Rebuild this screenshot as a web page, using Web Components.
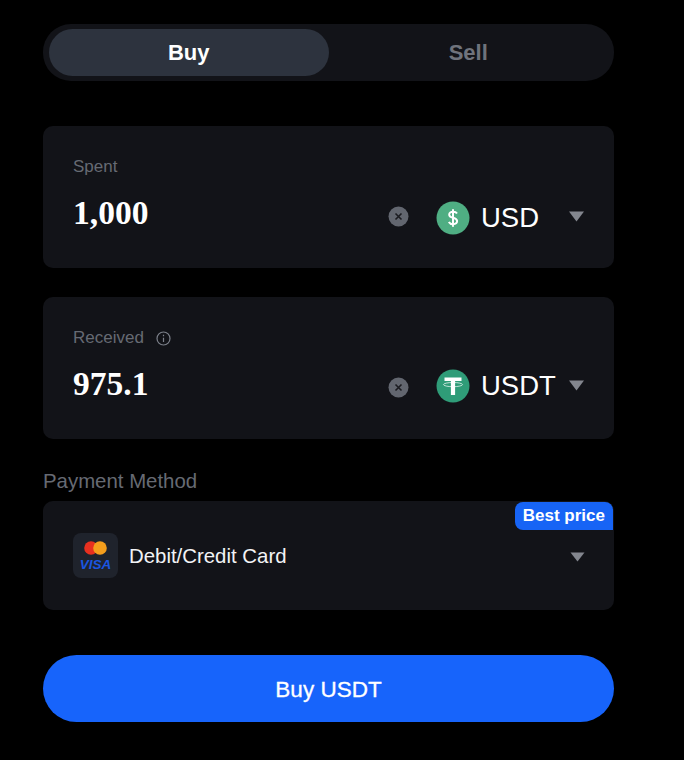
<!DOCTYPE html>
<html>
<head>
<meta charset="utf-8">
<style>
  html, body { margin: 0; background: #000; height: 760px; overflow: hidden; }
  body { font-family: "Liberation Sans", Arial, sans-serif; }
  swap-form { width: 571px; margin-left: 43px; padding-top: 24px; }
</style>
</head>
<body>
<swap-form>
  <side-tabs></side-tabs>
  <amount-card label="Spent" value="1,000" coin="USD" style="margin-top:45px;--coin-shift:2px;--caret-shift:-2px"></amount-card>
  <amount-card label="Received" value="975.1" coin="USDT" info style="margin-top:29px;--coin-shift:-4px;--caret-shift:-6px"></amount-card>
  <payment-method style="margin-top:30px"></payment-method>
  <buy-button style="margin-top:45px">Buy USDT</buy-button>
</swap-form>
<script>
class swapForm extends HTMLElement {
    constructor() {
        super()
        this.attachShadow({ mode: 'open' })
        this.shadowRoot.innerHTML = `<style>:host { display: flex; flex-direction: column; }</style><slot></slot>`
    }
}

class sideTabs extends HTMLElement {
    constructor() {
        super()
        this.attachShadow({ mode: 'open' })
        this.shadowRoot.innerHTML = `
        <style>
          :host {
            display: flex;
            height: 57px;
            box-sizing: border-box;
            padding: 5px 6px 5px 6px;
            background: #121318;
            border-radius: 28px;
            font-size: 22px;
            font-weight: 700;
          }
          div {
            flex: 1;
            display: flex;
            align-items: center;
            justify-content: center;
            border-radius: 24px;
            color: #6f737c;
            padding-top: 1px;
          }
          .on { background: #2d333e; color: #fff; }
        </style>
        <div class="on">Buy</div>
        <div>Sell</div>`
    }
}

const ICONS = {
    USD: `<svg width="34" height="34" viewBox="0 0 34 34"><circle cx="17" cy="17" r="16.5" fill="#4fae83"/>
        <path d="M21 12.600c-.7-1.200-2.100-1.900-3.900-1.900-2.300 0-3.900 1.200-3.900 3 0 4 7.900 2.200 7.900 6.400 0 1.900-1.700 3.100-4.100 3.100-1.900 0-3.400-.8-4.200-2.200M17 8.300v17.400" fill="none" stroke="#fff" stroke-width="2"/></svg>`,
    USDT: `<svg width="34" height="34" viewBox="0 0 34 34"><circle cx="17" cy="17" r="16.5" fill="#2f9c78"/>
        <path d="M8.500 8.500h17v3.600h-6.400v14h-4.200v-14H8.500z" fill="#fff"/>
        <ellipse cx="17" cy="15.600" rx="9.500" ry="2.100" fill="none" stroke="#fff" stroke-opacity=".7" stroke-width="1"/></svg>`
}

class amountCard extends HTMLElement {
    constructor() {
        super()
        this.attachShadow({ mode: 'open' })
    }
    getInfo() {
        if (!this.hasAttribute('info')) return ''
        return `<svg width="15" height="15" viewBox="0 0 15 15" fill="none" stroke="#7c808a" stroke-width="1.2">
            <circle cx="7.5" cy="7.5" r="6.5"/><path d="M7.500 6.700v4.300M7.500 3.800v1.400"/></svg>`
    }
    connectedCallback() {
        const coin = this.getAttribute('coin')
        this.shadowRoot.innerHTML = `
        <style>
          :host {
            display: flex;
            flex-direction: column;
            height: 142px;
            box-sizing: border-box;
            padding: 32px 29px 0 30px;
            background: #121318;
            border-radius: 10px;
          }
          .label {
            display: flex;
            align-items: center;
            gap: 12px;
            height: 18px;
            font-size: 17px;
            color: #666a73;
          }
          .row {
            display: flex;
            align-items: center;
            margin-top: 19px;
            height: 44px;
          }
          .value {
            flex: 1;
            font-family: "Liberation Serif", "Times New Roman", serif;
            font-weight: 700;
            font-size: 33.5px;
            color: #fff;
            margin-top: -8px;
          }
          .clear { display: block; margin-right: 27px; margin-top: -2px; }
          .icon { display: block; margin-right: 11px; margin-top: var(--coin-shift); height: 34px; }
          .coin { width: 87px; font-size: 27.5px; color: #fff; margin-top: var(--coin-shift); }
          .caret { display: block; margin-top: var(--caret-shift); }
        </style>
        <div class="label"><span>${this.getAttribute('label')}</span>${this.getInfo()}</div>
        <div class="row">
          <span class="value">${this.getAttribute('value')}</span>
          <svg class="clear" width="21" height="21" viewBox="0 0 21 21">
            <circle cx="10.5" cy="10.5" r="10" fill="#62666f"/>
            <path d="M7.500 7.500l6 6M13.500 7.500l-6 6" stroke="#1b1c21" stroke-width="1.6"/>
          </svg>
          <span class="icon">${ICONS[coin]}</span>
          <span class="coin">${coin}</span>
          <svg class="caret" width="17" height="11" viewBox="0 0 17 11"><path d="M1 .5h15l-7.500 10z" fill="#83868e"/></svg>
        </div>`
    }
}

class paymentMethod extends HTMLElement {
    constructor() {
        super()
        this.attachShadow({ mode: 'open' })
        this.shadowRoot.innerHTML = `
        <style>
          :host { display: block; }
          h4 {
            margin: 0 0 8px;
            height: 24px;
            line-height: 24px;
            font-size: 20.4px;
            font-weight: 400;
            color: #666a73;
          }
          .card {
            position: relative;
            display: flex;
            align-items: center;
            height: 109px;
            box-sizing: border-box;
            padding: 0 29px 0 30px;
            background: #121318;
            border-radius: 10px;
          }
          .logo {
            width: 45px;
            height: 45px;
            margin-right: 11px;
            background: #1f232c;
            border-radius: 8px;
            display: flex;
            flex-direction: column;
            align-items: center;
            padding-top: 8px;
            box-sizing: border-box;
          }
          .visa {
            font-size: 13.5px;
            line-height: 15px;
            font-weight: 700;
            font-style: italic;
            color: #1a56e0;
            margin-top: 2px;
          }
          .name { flex: 1; font-size: 20.4px; color: #f2f3f5; padding-top: 2px; }
          .badge {
            position: absolute;
            top: 1px;
            right: 1px;
            height: 28px;
            line-height: 28px;
            padding: 0 8px;
            background: #1764f5;
            color: #fff;
            font-size: 17px;
            font-weight: 700;
            border-radius: 8px 8px 0 8px;
          }
          .caret { display: block; margin-top: 3px; }
        </style>
        <h4>Payment Method</h4>
        <div class="card">
          <span class="badge">Best price</span>
          <div class="logo">
            <svg width="23" height="14" viewBox="0 0 23 14" style="display:block">
              <circle cx="7" cy="7" r="6.800" fill="#e8301f"/>
              <circle cx="16" cy="7" r="6.800" fill="#f59e1c"/>
            </svg>
            <span class="visa">VISA</span>
          </div>
          <span class="name">Debit/Credit Card</span>
          <svg class="caret" width="15" height="10" viewBox="0 0 15 10"><path d="M.5.5h14L7.500 9.500z" fill="#83868e"/></svg>
        </div>`
    }
}

class buyButton extends HTMLElement {
    constructor() {
        super()
        this.attachShadow({ mode: 'open' })
        this.shadowRoot.innerHTML = `
        <style>
          :host {
            display: flex;
            align-items: center;
            justify-content: center;
            height: 67px;
            box-sizing: border-box;
            padding-top: 2px;
            background: #1764fb;
            border-radius: 34px;
            color: #fff;
            font-size: 22.5px;
            font-weight: 400;
            -webkit-text-stroke: .3px #fff;
          }
        </style>
        <slot></slot>`
    }
}

customElements.define('swap-form', swapForm)
customElements.define('side-tabs', sideTabs)
customElements.define('amount-card', amountCard)
customElements.define('payment-method', paymentMethod)
customElements.define('buy-button', buyButton)
</script>
</body>
</html>
